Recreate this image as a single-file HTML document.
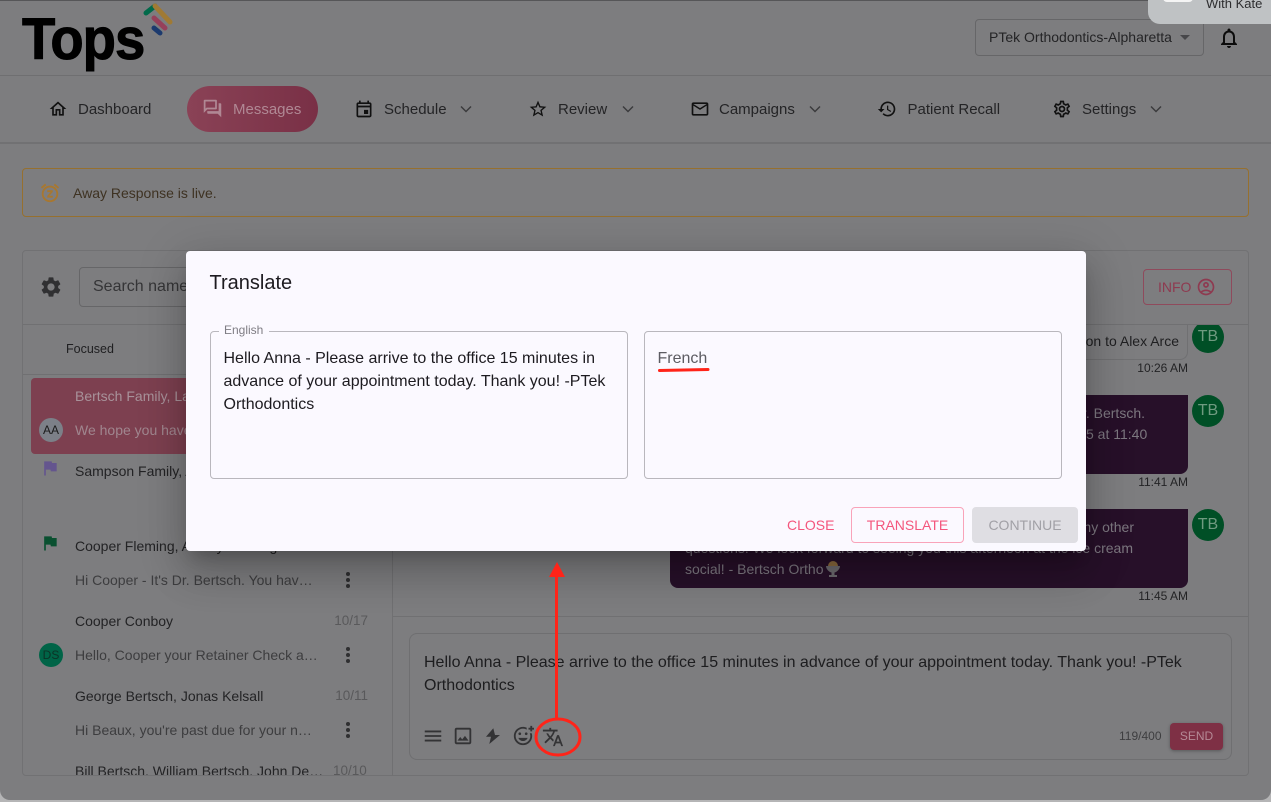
<!DOCTYPE html>
<html><head><meta charset="utf-8"><style>
html,body{margin:0;padding:0;width:1271px;height:802px;overflow:hidden;background:#b5b5b6}
body{font-family:"Liberation Sans",sans-serif;position:relative;color:#262628}
.a,.t,svg.i{position:absolute}
.t{white-space:nowrap;line-height:20px}
svg.i{fill:currentColor}
.nav{font-size:15px;color:#242426;top:100px}
.nm{font-size:14px;color:#232325;left:75px}
.pv{font-size:14px;color:#3d3d3f;left:75px}
.dt{font-size:13.5px;color:#59595b;right:903px}
.tm{font-size:12px;color:#232325;right:83px}
.bub{font-size:14px;color:#7d7880}
.av{position:absolute;border-radius:50%;text-align:center}
.tb{left:1192px;width:32px;height:32px;line-height:32px;background:#004f26;color:#6f9a80;font-size:16px}
.dots{position:absolute;left:346px;width:4px;height:4px;border-radius:50%;background:#2f2f31;box-shadow:0 6px 0 #2f2f31,0 12px 0 #2f2f31}
</style></head><body>
<div class="a" style="left:0;top:0;width:1271px;height:800px;background:#7d7d7f;border-radius:0 0 10px 10px"></div>
<div class="a" style="left:0;top:0;width:1271px;height:1px;background:#565658"></div>

<!-- logo -->
<div class="t" style="left:22px;top:5px;font-size:58px;line-height:70px;font-weight:bold;letter-spacing:-1px;color:#000;-webkit-text-stroke:1px #000;transform:scaleX(.94);transform-origin:left top">Tops</div>
<svg class="a" style="left:140px;top:0" width="36" height="38" fill="none" stroke-linecap="round" stroke-width="5">
<path d="M6 13L15 6" stroke="#016a4a"/><path d="M15 6L30 22" stroke="#a07a34"/><path d="M14 18L25 28" stroke="#96405a"/><path d="M14 28L20 33" stroke="#1c3a6e"/>
</svg>
<div class="a" style="left:0;top:75px;width:1271px;height:1px;background:#6f6f71"></div>

<!-- top right -->
<div class="a" style="left:975px;top:19px;width:227px;height:35px;border:1px solid #666668;border-radius:4px"></div>
<div class="t" style="left:989px;top:27px;font-size:14px;color:#242426">PTek Orthodontics-Alpharetta</div>
<div class="a" style="left:1180px;top:35px;width:0;height:0;border-left:5px solid transparent;border-right:5px solid transparent;border-top:5px solid #47474a"></div>
<svg class="i" style="left:1217px;top:26px;color:#0c0c0c" width="24" height="24" viewBox="0 0 24 24"><path d="M12 22c1.1 0 2-.9 2-2h-4c0 1.1.9 2 2 2zm6-6v-5c0-3.07-1.63-5.64-4.5-6.32V4c0-.83-.67-1.5-1.5-1.5s-1.5.67-1.5 1.5v.68C7.64 5.36 6 7.92 6 11v5l-2 2v1h16v-1l-2-2zm-2 1H8v-6c0-2.48 1.51-4.5 4-4.5s4 2.02 4 4.5v6z"/></svg>
<div class="a" style="left:1148px;top:-4px;width:130px;height:28px;background:#bfc2c4;border-radius:0 0 0 12px"></div>
<div class="a" style="left:1163px;top:-6px;width:30px;height:8px;background:#f4f4f4;border-radius:4px"></div>
<div class="t" style="left:1206px;top:-6px;font-size:13px;color:#2d2d2f">With Kate</div>

<!-- nav -->
<svg class="i" style="left:48px;top:99px;color:#111" width="20" height="20" viewBox="0 0 24 24"><path d="M12 5.69l5 4.5V18h-2v-6H9v6H7v-7.81l5-4.5M12 3L2 12h3v8h6v-6h2v6h6v-8h3L12 3z"/></svg>
<div class="t nav" style="left:78px">Dashboard</div>
<div class="a" style="left:187px;top:86px;width:131px;height:46px;border-radius:23px;background:linear-gradient(90deg,#8a4256,#793046)"></div>
<svg class="i" style="left:202px;top:98px;color:#b08894" width="21" height="21" viewBox="0 0 24 24"><path d="M15 4v7H5.17l-.59.59-.58.58V4h11m1-2H3c-.55 0-1 .45-1 1v14l4-4h10c.55 0 1-.45 1-1V3c0-.55-.45-1-1-1zm5 4h-2v9H6v2c0 .55.45 1 1 1h11l4 4V7c0-.55-.45-1-1-1z"/></svg>
<div class="t nav" style="left:233px;color:#b08894">Messages</div>
<svg class="i" style="left:354px;top:99px;color:#111" width="20" height="20" viewBox="0 0 24 24"><path d="M19 4h-1V2h-2v2H8V2H6v2H5c-1.11 0-2 .9-2 2v14c0 1.1.89 2 2 2h14c1.1 0 2-.9 2-2V6c0-1.1-.9-2-2-2zm0 16H5V10h14v10zm0-12H5V6h14v2zm-7 5h5v5h-5z"/></svg>
<div class="t nav" style="left:384px">Schedule</div>
<svg class="a" style="left:460px;top:105px" width="12" height="8" fill="none" stroke="#3b3b3d" stroke-width="1.5"><path d="M1 1.5l5 5 5-5"/></svg>
<svg class="i" style="left:528px;top:99px;color:#111" width="20" height="20" viewBox="0 0 24 24"><path d="M22 9.24l-7.19-.62L12 2 9.19 8.63 2 9.24l5.46 4.73L5.82 21 12 17.27 18.18 21l-1.63-7.03L22 9.24zM12 15.4l-3.76 2.27 1-4.28-3.32-2.88 4.38-.38L12 6.1l1.71 4.04 4.38.38-3.32 2.88 1 4.28L12 15.4z"/></svg>
<div class="t nav" style="left:558px">Review</div>
<svg class="a" style="left:622px;top:105px" width="12" height="8" fill="none" stroke="#3b3b3d" stroke-width="1.5"><path d="M1 1.5l5 5 5-5"/></svg>
<svg class="i" style="left:690px;top:99px;color:#111" width="20" height="20" viewBox="0 0 24 24"><path d="M20 4H4c-1.1 0-1.99.9-1.99 2L2 18c0 1.1.9 2 2 2h16c1.1 0 2-.9 2-2V6c0-1.1-.9-2-2-2zm0 14H4V8l8 5 8-5v10zm-8-7L4 6h16l-8 5z"/></svg>
<div class="t nav" style="left:719px">Campaigns</div>
<svg class="a" style="left:809px;top:105px" width="12" height="8" fill="none" stroke="#3b3b3d" stroke-width="1.5"><path d="M1 1.5l5 5 5-5"/></svg>
<svg class="i" style="left:877px;top:99px;color:#111" width="20" height="20" viewBox="0 0 24 24"><path d="M13 3c-4.97 0-9 4.03-9 9H1l3.89 3.89.07.14L9 12H6c0-3.87 3.13-7 7-7s7 3.13 7 7-3.13 7-7 7c-1.93 0-3.68-.79-4.94-2.06l-1.42 1.42C8.27 19.99 10.51 21 13 21c4.97 0 9-4.03 9-9s-4.03-9-9-9zm-1 5v5l4.28 2.54.72-1.21-3.5-2.08V8H12z"/></svg>
<div class="t nav" style="left:907.5px">Patient Recall</div>
<svg class="i" style="left:1052px;top:99px;color:#111" width="20" height="20" viewBox="0 0 24 24"><path d="M19.43 12.98c.04-.32.07-.64.07-.98 0-.34-.03-.66-.07-.98l2.11-1.65c.19-.15.24-.42.12-.64l-2-3.46c-.09-.16-.26-.25-.44-.25-.06 0-.12.01-.17.03l-2.49 1c-.52-.4-1.08-.73-1.69-.98l-.38-2.65C14.46 2.18 14.25 2 14 2h-4c-.25 0-.46.18-.49.42l-.38 2.65c-.61.25-1.17.59-1.69.98l-2.49-1c-.06-.02-.12-.03-.18-.03-.17 0-.34.09-.43.25l-2 3.46c-.13.22-.07.49.12.64l2.11 1.65c-.04.32-.07.65-.07.98 0 .33.03.66.07.98l-2.11 1.65c-.19.15-.24.42-.12.64l2 3.46c.09.16.26.25.44.25.06 0 .12-.01.17-.03l2.49-1c.52.4 1.08.73 1.69.98l.38 2.65c.03.24.24.42.49.42h4c.25 0 .46-.18.49-.42l.38-2.65c.61-.25 1.17-.59 1.69-.98l2.49 1c.06.02.12.03.18.03.17 0 .34-.09.43-.25l2-3.46c.12-.22.07-.49-.12-.64l-2.11-1.65zm-1.98-1.71c.04.31.05.52.05.73 0 .21-.02.43-.05.73l-.14 1.13.89.7 1.08.84-.7 1.21-1.27-.51-1.04-.42-.9.68c-.43.32-.84.56-1.25.73l-1.06.43-.16 1.13-.2 1.35h-1.4l-.19-1.35-.16-1.13-1.06-.43c-.43-.18-.83-.41-1.23-.71l-.91-.7-1.06.43-1.27.51-.7-1.21 1.08-.84.89-.7-.14-1.13c-.03-.31-.05-.54-.05-.74s.02-.43.05-.73l.14-1.13-.89-.7-1.08-.84.7-1.21 1.27.51 1.04.42.9-.68c.43-.32.84-.56 1.25-.73l1.06-.43.16-1.13.2-1.35h1.39l.19 1.35.16 1.13 1.06.43c.43.18.83.41 1.23.71l.91.7 1.06-.43 1.27-.51.7 1.21-1.07.85-.89.7.14 1.13zM12 8c-2.21 0-4 1.79-4 4s1.79 4 4 4 4-1.79 4-4-1.79-4-4-4zm0 6c-1.1 0-2-.9-2-2s.9-2 2-2 2 .9 2 2-.9 2-2 2z"/></svg>
<div class="t nav" style="left:1082px">Settings</div>
<svg class="a" style="left:1150px;top:105px" width="12" height="8" fill="none" stroke="#3b3b3d" stroke-width="1.5"><path d="M1 1.5l5 5 5-5"/></svg>
<div class="a" style="left:0;top:142px;width:1271px;height:2px;background:#717173"></div>

<!-- alert -->
<div class="a" style="left:22px;top:168px;width:1225px;height:47px;border:1px solid #96702f;border-radius:4px"></div>
<svg class="i" style="left:39px;top:182px;color:#a8772f" width="22" height="22" viewBox="0 0 24 24"><path d="M9 11h3.63L9 15.2V17h6v-2h-3.63L15 10.8V9H9v2zm7.056-7.654 1.282-1.535 4.607 3.85-1.28 1.54zM3.336 7.19l-1.28-1.536L6.662 1.81l1.28 1.536zM12 6c3.86 0 7 3.14 7 7s-3.14 7-7 7-7-3.14-7-7 3.14-7 7-7m0-2c-4.97 0-9 4.03-9 9s4.03 9 9 9 9-4.03 9-9-4.03-9-9-9z"/></svg>
<div class="t" style="left:73px;top:183px;font-size:14px;color:#3e3222">Away Response is live.</div>

<!-- panel -->
<div class="a" style="left:22px;top:250px;width:1227px;height:526px;border:1px solid #717173;border-radius:4px;box-sizing:border-box"></div>
<div class="a" style="left:23px;top:324px;width:1225px;height:1px;background:#707072"></div>
<div class="a" style="left:392px;top:324px;width:1px;height:452px;background:#707072"></div>
<div class="a" style="left:393px;top:616px;width:855px;height:1px;background:#707072"></div>
<svg class="i" style="left:39px;top:275px;color:#303032" width="24" height="24" viewBox="0 0 24 24"><path d="M19.14 12.94c.04-.3.06-.61.06-.94 0-.32-.02-.64-.07-.94l2.03-1.58c.18-.14.23-.41.12-.61l-1.92-3.32c-.12-.22-.37-.29-.59-.22l-2.39.96c-.5-.38-1.03-.7-1.62-.94l-.36-2.54c-.04-.24-.24-.41-.48-.41h-3.84c-.24 0-.43.17-.47.41l-.36 2.54c-.59.24-1.13.57-1.62.94l-2.39-.96c-.22-.08-.47 0-.59.22L2.74 8.87c-.12.21-.08.47.12.61l2.03 1.58c-.05.3-.09.63-.09.94s.02.64.07.94l-2.03 1.58c-.18.14-.23.41-.12.61l1.92 3.32c.12.22.37.29.59.22l2.39-.96c.5.38 1.03.7 1.62.94l.36 2.54c.05.24.24.41.48.41h3.84c.24 0 .44-.17.47-.41l.36-2.54c.59-.24 1.13-.56 1.62-.94l2.39.96c.22.08.47 0 .59-.22l1.92-3.32c.12-.22.07-.47-.12-.61l-2.01-1.58zM12 15.6c-1.98 0-3.6-1.62-3.6-3.6s1.62-3.6 3.6-3.6 3.6 1.62 3.6 3.6-1.62 3.6-3.6 3.6z"/></svg>
<div class="a" style="left:79px;top:267px;width:150px;height:38px;border:1px solid #666668;border-radius:4px"></div>
<div class="t" style="left:93px;top:277px;font-size:16px;color:#353537">Search name</div>
<div class="a" style="left:1143px;top:269px;width:87px;height:34px;border:1px solid #8f4a5c;border-radius:4px"></div>
<div class="t" style="left:1158px;top:277px;font-size:14px;color:#8e3a50">INFO</div>
<svg class="i" style="left:1196px;top:277px;color:#8e3a50" width="20" height="20" viewBox="0 0 24 24"><path d="M12 2C6.48 2 2 6.48 2 12s4.48 10 10 10 10-4.48 10-10S17.52 2 12 2zM7.35 18.5C8.66 17.56 10.26 17 12 17s3.34.56 4.65 1.5c-1.31.94-2.91 1.5-4.65 1.5s-3.34-.56-4.65-1.5zm10.79-1.38C16.45 15.8 14.32 15 12 15s-4.45.8-6.14 2.12C4.7 15.73 4 13.95 4 12c0-4.42 3.58-8 8-8s8 3.58 8 8c0 1.95-.7 3.73-1.86 5.12zM12 6c-1.93 0-3.5 1.57-3.5 3.5S10.07 13 12 13s3.5-1.57 3.5-3.5S13.93 6 12 6zm0 5c-.83 0-1.5-.67-1.5-1.5S11.17 8 12 8s1.5.67 1.5 1.5S12.83 11 12 11z"/></svg>
<div class="t" style="left:66px;top:339px;font-size:12.5px;color:#1f1f21">Focused</div>
<div class="a" style="left:23px;top:374px;width:369px;height:1px;background:#707072"></div>

<!-- list -->
<div class="a" style="left:31px;top:378px;width:240px;height:76px;background:#7d4050;border-radius:4px"></div>
<div class="t" style="left:75px;top:386px;font-size:14px;color:#a8929a">Bertsch Family, Lauren</div>
<div class="t" style="left:75px;top:420px;font-size:14px;color:#a0868f">We hope you have</div>
<div class="av" style="left:39px;top:418px;width:24px;height:24px;line-height:24px;background:#7c8088;color:#1a1a1a;font-size:12px">AA</div>
<svg class="i" style="left:40px;top:458px;color:#64558e" width="20" height="20" viewBox="0 0 24 24"><path d="M14.4 6L14 4H5v17h2v-7h5.6l.4 2h7V6z"/></svg>
<div class="t nm" style="top:461px">Sampson Family, Alex</div>
<svg class="i" style="left:40px;top:533px;color:#0a5030" width="20" height="20" viewBox="0 0 24 24"><path d="M14.4 6L14 4H5v17h2v-7h5.6l.4 2h7V6z"/></svg>
<div class="t nm" style="top:536px">Cooper Fleming, Ashley Fleming</div>
<div class="t pv" style="top:570px;width:240px;overflow:hidden;text-overflow:ellipsis">Hi Cooper - It's Dr. Bertsch. You have an appointment</div>
<div class="dots" style="top:572px"></div>
<div class="t nm" style="top:611px">Cooper Conboy</div>
<div class="t dt" style="top:611px">10/17</div>
<div class="av" style="left:39px;top:643px;width:24px;height:24px;line-height:24px;background:#006447;color:#0b3326;font-size:12px">DS</div>
<div class="t pv" style="top:645px;width:244px;overflow:hidden;text-overflow:ellipsis">Hello, Cooper your Retainer Check appointment</div>
<div class="dots" style="top:647px"></div>
<div class="t nm" style="top:686px">George Bertsch, Jonas Kelsall</div>
<div class="t dt" style="top:686px">10/11</div>
<div class="t pv" style="top:720px;width:240px;overflow:hidden;text-overflow:ellipsis">Hi Beaux, you're past due for your next appointment</div>
<div class="dots" style="top:722px"></div>
<div class="a" style="left:23px;top:760px;width:369px;height:15px;overflow:hidden">
<div class="t nm" style="left:52px;top:1px;width:250px;overflow:hidden;text-overflow:ellipsis">Bill Bertsch, William Bertsch, John Dean Bertsch</div>
<div class="t" style="left:310px;top:1px;font-size:13.5px;color:#59595b">10/10</div>
</div>

<!-- chat -->
<div class="a" style="left:900px;top:324px;width:286px;height:35px;border:1px solid #707072;border-top:0;border-radius:0 0 8px 0"></div>
<div class="t" style="right:92px;top:331px;font-size:14px;color:#1f1f21">Confirmation to Alex Arce</div>
<div class="a" style="left:1192px;top:325px;width:32px;height:29px;overflow:hidden"><div class="av tb" style="left:0;top:-4px">TB</div></div>
<div class="t tm" style="top:358px">10:26 AM</div>
<div class="a" style="left:800px;top:395px;width:388px;height:79px;background:#271029;border-radius:0 0 8px 8px"></div>
<div class="t bub" style="right:126px;top:403px">Dr. Bertsch.</div>
<div class="t bub" style="left:1086px;top:424px">5 at 11:40</div>
<div class="av tb" style="top:395px">TB</div>
<div class="t tm" style="top:472px">11:41 AM</div>
<div class="a" style="left:670px;top:509px;width:518px;height:79px;background:#271029;border-radius:0 0 8px 8px"></div>
<div class="t bub" style="right:137px;top:517px">any other</div>
<div class="t bub" style="left:685px;top:538px">questions! We look forward to seeing you this afternoon at the ice cream</div>
<div class="t bub" style="left:685px;top:559px">social! - Bertsch Ortho</div>
<svg class="a" style="left:824px;top:559px" width="18" height="20"><path d="M4 7a5 5 0 0 1 10 0z" fill="#8a6a3e"/><path d="M2 7h14c0 3-3 6-5.5 6.5V16H13v2H5v-2h2.500v-2.500C5 13 2 10 2 7z" fill="#6c6a6e"/></svg>
<div class="av tb" style="top:509px">TB</div>
<div class="t tm" style="top:586px">11:45 AM</div>

<!-- composer -->
<div class="a" style="left:409px;top:633px;width:821px;height:125px;border:1px solid #6f6f71;border-radius:8px"></div>
<div class="a" style="left:424px;top:651px;width:790px;font-size:16px;line-height:23px;color:#1d1d1f">Hello Anna - Please arrive to the office 15 minutes in advance of your appointment today. Thank you! -PTek Orthodontics</div>
<svg class="i" style="left:422px;top:725px;color:#333335" width="22" height="22" viewBox="0 0 24 24"><path d="M3 18h18v-2H3v2zm0-5h18v-2H3v2zm0-7v2h18V6H3z"/></svg>
<svg class="i" style="left:452px;top:725px;color:#333335" width="22" height="22" viewBox="0 0 24 24"><path d="M19 5v14H5V5h14m0-2H5c-1.1 0-2 .9-2 2v14c0 1.1.9 2 2 2h14c1.1 0 2-.9 2-2V5c0-1.1-.9-2-2-2zm-4.860 8.860l-3 3.870L9 13.140 6 17h12l-3.860-5.140z"/></svg>
<svg class="i" style="left:482px;top:725px;color:#333335" width="22" height="22" viewBox="0 0 22 22"><path d="M11.300 3.300L4 11.700h5L7.300 19 18 10h-5z"/></svg>
<svg class="i" style="left:512px;top:725px;color:#333335" width="22" height="22" viewBox="0 0 24 24"><path d="M7 9.5C7 8.67 7.67 8 8.5 8s1.5.67 1.5 1.5S9.33 11 8.5 11 7 10.33 7 9.5zm5 8c2.33 0 4.31-1.46 5.11-3.5H6.89c.8 2.04 2.78 3.5 5.11 3.5zm3.5-6.500c.83 0 1.500-.67 1.500-1.500S16.330 8 15.500 8 14 8.670 14 9.500s.67 1.500 1.500 1.500zM22 1h-2v2h-2v2h2v2h2V5h2V3h-2V1zm-2 11c0 4.420-3.580 8-8 8s-8-3.580-8-8 3.580-8 8-8c1.460 0 2.820.4 4 1.080V2.840C14.770 2.300 13.420 2 11.990 2 6.470 2 2 6.480 2 12s4.470 10 9.990 10C17.520 22 22 17.520 22 12c0-1.050-.17-2.050-.47-3h-2.130c.38.930.6 1.940.6 3z"/></svg>
<svg class="i" style="left:542px;top:726px;color:#333335" width="22" height="22" viewBox="0 0 24 24"><path d="M12.870 15.070l-2.540-2.510.03-.03c1.740-1.940 2.980-4.170 3.710-6.530H17V4h-7V2H8v2H1v1.990h11.170C11.500 7.920 10.440 9.750 9 11.350 8.070 10.320 7.300 9.190 6.690 8h-2c.73 1.630 1.730 3.170 2.980 4.560l-5.090 5.020L4 19l5-5 3.110 3.110.76-2.040zM18.500 10h-2L12 22h2l1.120-3h4.750L21 22h2l-4.500-12zm-2.620 7l1.620-4.330L19.120 17h-3.240z"/></svg>
<div class="t" style="left:1119px;top:726px;font-size:12px;color:#3e3e40">119/400</div>
<div class="a" style="left:1170px;top:723px;width:53px;height:27px;line-height:26px;text-align:center;background:#7e3045;border-radius:4px;font-size:12px;color:#b58a96;box-shadow:0 1px 3px rgba(0,0,0,.3)">SEND</div>

<!-- dialog -->
<div class="a" style="left:186px;top:251px;width:900px;height:300px;background:#fbf9ff;border-radius:4px;box-shadow:0 11px 15px -7px rgba(0,0,0,.2),0 24px 38px 3px rgba(0,0,0,.14),0 9px 46px 8px rgba(0,0,0,.12)"></div>
<div class="t" style="left:209.5px;top:273px;font-size:20px;color:#1d1b20">Translate</div>
<div class="a" style="left:210px;top:331px;width:416px;height:146px;border:1px solid #b9b7bd;border-radius:4px"></div>
<div class="a" style="left:219px;top:329px;width:50px;height:4px;background:#fbf9ff"></div>
<div class="t" style="left:224px;top:320px;font-size:12px;color:#7f7d84">English</div>
<div class="a" style="left:223.5px;top:347px;width:396px;font-size:16px;line-height:23px;color:#1d1b20">Hello Anna - Please arrive to the office 15 minutes in advance of your appointment today. Thank you! -PTek Orthodontics</div>
<div class="a" style="left:644px;top:331px;width:416px;height:146px;border:1px solid #b9b7bd;border-radius:4px"></div>
<div class="t" style="left:657.5px;top:349px;font-size:16px;color:#5d5c62">French</div>
<svg class="a" style="left:655px;top:364px" width="60" height="10" fill="none"><path d="M4.500 6.500L53 5.500" stroke="#ff2419" stroke-width="3" stroke-linecap="round"/></svg>
<div class="t" style="left:787px;top:515px;font-size:14px;color:#f4567d">CLOSE</div>
<div class="a" style="left:851px;top:507px;width:111px;height:34px;border:1px solid #f9a3b9;border-radius:4px;text-align:center;line-height:35px;font-size:14px;color:#f4567d">TRANSLATE</div>
<div class="a" style="left:972px;top:507px;width:106px;height:36px;background:#dfdee3;border-radius:4px;text-align:center;line-height:36px;font-size:14px;color:#a1a0a6">CONTINUE</div>

<!-- annotations -->
<svg class="a" style="left:0;top:0" width="1271" height="802" fill="none">
<ellipse cx="558" cy="737" rx="22" ry="18" stroke="#ff2419" stroke-width="3"/>
<path d="M556.500 719V575" stroke="#ff2419" stroke-width="3"/>
<path d="M557 562l8 15h-16z" fill="#ff2419"/>
</svg>
</body></html>
